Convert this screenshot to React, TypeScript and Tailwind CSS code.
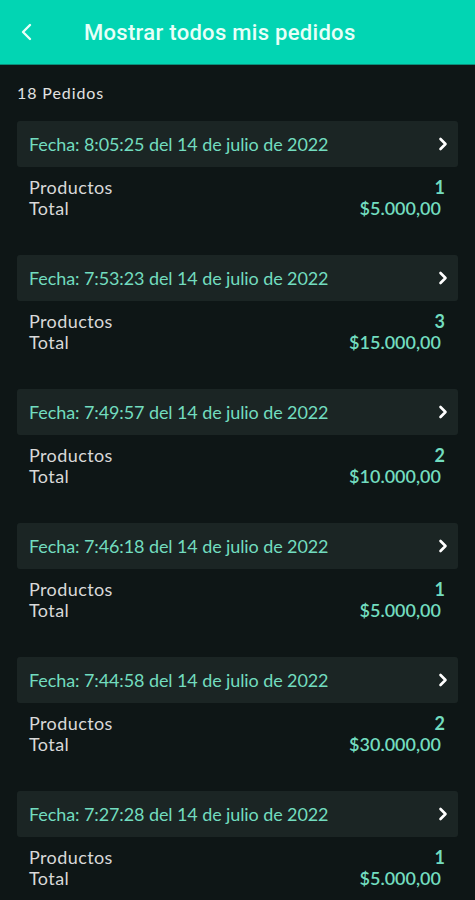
import React from "react";

const orders = [
  { time: "8:05:25", qty: "1", total: "$5.000,00" },
  { time: "7:53:23", qty: "3", total: "$15.000,00" },
  { time: "7:49:57", qty: "2", total: "$10.000,00" },
  { time: "7:46:18", qty: "1", total: "$5.000,00" },
  { time: "7:44:58", qty: "2", total: "$30.000,00" },
  { time: "7:27:28", qty: "1", total: "$5.000,00" },
];

function Chevron() {
  return (
    <svg width="10" height="14" viewBox="0 0 10 14" fill="none">
      <polyline points="2.5,2 7.5,7 2.5,12" stroke="#ffffff" strokeWidth="2.6" strokeLinecap="round" strokeLinejoin="round" />
    </svg>
  );
}

export default function App() {
  return (
    <div className="w-[475px] h-[900px] overflow-hidden bg-[#0e1616]" style={{ fontFamily: "Lato, 'Noto Sans', sans-serif" }}>
      <div className="h-[65px] bg-[#02d5b3] border-b border-[#0a8f7a] flex items-center">
        <div className="w-[84px] pl-[19px] flex items-center">
          <svg width="14" height="20" viewBox="0 0 14 20" fill="none">
            <polyline points="11,3 4,10 11,17" stroke="#e8fff8" strokeWidth="2.4" strokeLinecap="round" strokeLinejoin="round" />
          </svg>
        </div>
        <div className="text-[22px] font-medium text-[#e8fff8] tracking-[0.3px]" style={{ fontFamily: "Roboto, sans-serif" }}>
          Mostrar todos mis pedidos
        </div>
      </div>
      <div className="px-[17px]">
        <div className="pt-[18px] pb-[18px] text-[16px] leading-[20px] text-[#e2e2e2] tracking-[0.9px]">18 Pedidos</div>
        <div className="flex flex-col">
          {orders.map((o, i) => (
            <div key={i} className="h-[134px] flex flex-col">
              <div className="h-[46px] bg-[#1b2524] rounded-[3px] flex items-center justify-between pl-[12px] pr-[10px]">
                <span className="text-[18px] text-[#72dcbf] tracking-[-0.1px]">Fecha: {o.time} del 14 de julio de 2022</span>
                <Chevron />
              </div>
              <div className="pt-[10px] pl-[12px] text-[18px] leading-[21px]">
                <div className="flex justify-between pr-[13px]">
                  <span className="text-[#d9d9d9] tracking-[0.4px]">Productos</span>
                  <span className="text-[#72dcbf] font-bold">{o.qty}</span>
                </div>
                <div className="flex justify-between pr-[17px]">
                  <span className="text-[#d9d9d9] tracking-[0.4px]">Total</span>
                  <span className="text-[#72dcbf] font-semibold">{o.total}</span>
                </div>
              </div>
            </div>
          ))}
        </div>
      </div>
    </div>
  );
}
